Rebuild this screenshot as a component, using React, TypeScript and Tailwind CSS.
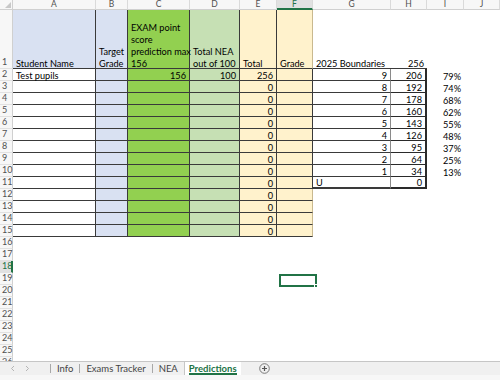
import type { ReactNode } from 'react'

const COLS = ['A', 'B', 'C', 'D', 'E', 'F', 'G', 'H', 'I', 'J'] as const
type Col = (typeof COLS)[number]

const WIDTH: Record<Col, string> = {
  A: 'w-[83px]',
  B: 'w-[32px]',
  C: 'w-[62px]',
  D: 'w-[50px]',
  E: 'w-[37px]',
  F: 'w-[36px]',
  G: 'w-[78px]',
  H: 'w-[36px]',
  I: 'w-[37px]',
  J: 'w-[36px]',
}

const FILL: Partial<Record<Col, string>> = {
  A: 'bg-white',
  B: 'bg-[#d9e1f2]',
  C: 'bg-[#92d050]',
  D: 'bg-[#c6e0b4]',
  E: 'bg-[#fff2cc]',
  F: 'bg-[#fff2cc]',
}

const grades = ['9', '8', '7', '6', '5', '4', '3', '2', '1', 'U']
const bounds = [206, 192, 178, 160, 143, 126, 95, 64, 34, 0]
const pct = ['79%', '74%', '68%', '62%', '55%', '48%', '37%', '25%', '13%']

const DARK = 'border-[#3a3a3a]'

function Cell({ col, className = '', right, children }: { col: Col; className?: string; right?: boolean; children?: ReactNode }) {
  return (
    <div
      className={`${WIDTH[col]} h-full shrink-0 flex items-end whitespace-nowrap px-[3px] leading-[12px] text-[9.2px] text-black ${
        right ? 'justify-end' : 'justify-start'
      } ${className}`}
    >
      {children != null && children !== false && <span className="relative top-[2px]">{children}</span>}
    </div>
  )
}

function RowHead({ n, active }: { n: number; active?: boolean }) {
  return (
    <div
      className={`w-[13px] h-full shrink-0 flex items-end pl-[2px] pb-[2px] text-[9px] leading-none border-b border-[#e1e1e1] ${
        active
          ? 'bg-[#e1e1e1] text-[#217346] border-r-2 border-r-[#217346]'
          : 'bg-[#f7f7f7] text-[#505050] border-r border-r-[#d0d0d0]'
      }`}
    >
      {n}
    </div>
  )
}

function DataRow({ r }: { r: number }) {
  const inData = r <= 15
  const inBounds = r <= 11
  const i = r - 2
  return (
    <div className="flex h-[12px] shrink-0">
      <RowHead n={r} active={r === 18} />
      {(['A', 'B', 'C', 'D', 'E'] as Col[]).map((c) => (
        <Cell
          key={c}
          col={c}
          right={c !== 'A'}
          className={inData ? `${FILL[c]} border-r border-b ${DARK}` : ''}
        >
          {c === 'A' && r === 2 && 'Test pupils'}
          {c === 'C' && r === 2 && '156'}
          {c === 'D' && r === 2 && '100'}
          {c === 'E' && inData && (r === 2 ? '256' : '0')}
        </Cell>
      ))}
      <Cell
        col="F"
        className={`relative ${
          inData
            ? `${FILL.F} border-b ${DARK} border-r ${inBounds ? 'border-r-[#3a3a3a]' : 'border-r-[#c9b98f]'}`
            : ''
        }`}
      >
        {r === 18 && (
          <div className="absolute -left-[1px] -top-[1px] w-[38px] h-[13px] border-2 border-[#217346]">
            <div className="absolute -right-[3px] -bottom-[3px] w-[4px] h-[4px] bg-[#217346] border border-white" />
          </div>
        )}
      </Cell>
      <Cell
        col="G"
        right={r !== 11}
        className={
          inBounds
            ? `border-b ${r === 11 ? 'border-b-2' : ''} ${DARK} border-r border-r-[#8a8a8a]`
            : ''
        }
      >
        {inBounds && grades[i]}
      </Cell>
      <Cell
        col="H"
        right
        className={inBounds ? `border-b ${r === 11 ? 'border-b-2' : ''} border-r-2 border-[#2a2a2a]` : ''}
      >
        {inBounds && bounds[i]}
      </Cell>
      <Cell col="I" right>
        {r <= 10 && pct[i]}
      </Cell>
      <Cell col="J" />
    </div>
  )
}

function ColumnHeader() {
  return (
    <div className="flex h-[10px] shrink-0">
      <div className="w-[13px] h-full shrink-0 relative bg-[#f7f7f7] border-r border-b border-[#d0d0d0]">
        <div className="absolute right-[1px] bottom-[1px] w-0 h-0 border-l-[6px] border-l-transparent border-b-[6px] border-b-[#c8c8c8]" />
      </div>
      {COLS.map((c) => (
        <div
          key={c}
          className={`${WIDTH[c]} h-full shrink-0 flex items-center justify-center text-[8.5px] leading-none border-r border-r-[#dadada] ${
            c === 'F'
              ? 'bg-[#e1e1e1] text-[#217346] border-b-2 border-b-[#217346]'
              : 'bg-[#f7f7f7] text-[#505050] border-b border-b-[#d0d0d0]'
          }`}
        >
          {c}
        </div>
      ))}
    </div>
  )
}

function HeadingRow() {
  return (
    <div className="flex h-[59px] shrink-0">
      <RowHead n={1} />
      <Cell col="A" className={`bg-[#d9e1f2] border-r border-b ${DARK}`}>Student Name</Cell>
      <Cell col="B" className={`bg-[#d9e1f2] border-r border-b ${DARK}`}>
        Target<br />Grade
      </Cell>
      <Cell col="C" className={`bg-[#92d050] border-r border-b ${DARK}`}>
        EXAM point<br />score<br />prediction max<br />156
      </Cell>
      <Cell col="D" className={`bg-[#c6e0b4] border-r border-b ${DARK}`}>
        Total NEA<br />out of 100
      </Cell>
      <Cell col="E" className={`bg-[#fff2cc] border-r border-b ${DARK}`}>Total</Cell>
      <Cell col="F" className={`bg-[#fff2cc] border-b ${DARK} border-r border-r-[#c9b98f]`}>Grade</Cell>
      <Cell col="G" className={`border-b ${DARK}`}>2025 Boundaries</Cell>
      <Cell col="H" right className={`border-b ${DARK}`}>256</Cell>
      <Cell col="I" />
      <Cell col="J" />
    </div>
  )
}

function Chevron({ dir }: { dir: 'l' | 'r' }) {
  return (
    <svg width="5" height="7" viewBox="0 0 5 7" className="shrink-0">
      <path d={dir === 'l' ? 'M4 1 L1.5 3.5 L4 6' : 'M1 1 L3.5 3.5 L1 6'} fill="none" stroke="#b5b5b5" strokeWidth="1" />
    </svg>
  )
}

function SheetTabs() {
  const tabs = ['Info', 'Exams Tracker', 'NEA']
  return (
    <div className="h-[14px] shrink-0 flex items-stretch bg-[#f0f0f0] border-t border-[#c6c6c6] text-[9.5px] leading-none text-[#444]">
      <div className="w-[50px] flex items-center gap-[10px] pl-[10px]">
        <Chevron dir="l" />
        <Chevron dir="r" />
      </div>
      {tabs.map((t) => (
        <div key={t} className="flex items-center px-[6px] border-l border-[#a8a8a8] my-[2px]">
          {t}
        </div>
      ))}
      <div className="flex items-center px-[4px] bg-white font-bold text-[#217346] relative border-l border-[#c6c6c6]">
        Predictions
        <div className="absolute left-[4px] right-[4px] bottom-[0px] h-[2px] bg-[#217346]" />
      </div>
      <div className="flex items-center pl-[18px]">
        <svg width="11" height="11" viewBox="0 0 11 11">
          <circle cx="5.5" cy="5.5" r="4.8" fill="none" stroke="#7a7a7a" strokeWidth="1" />
          <path d="M5.5 3 V8 M3 5.5 H8" stroke="#555" strokeWidth="1.2" />
        </svg>
      </div>
    </div>
  )
}

export default function App() {
  const rows = Array.from({ length: 25 }, (_, k) => k + 2)
  return (
    <div className="w-[500px] h-[380px] overflow-hidden bg-white flex flex-col font-['Lato',sans-serif]">
      <div className="h-[361px] shrink-0 overflow-hidden flex flex-col">
        <ColumnHeader />
        <HeadingRow />
        {rows.map((r) => (
          <DataRow key={r} r={r} />
        ))}
      </div>
      <SheetTabs />
      <div className="flex-1 bg-[#f7f7f7]" />
    </div>
  )
}
